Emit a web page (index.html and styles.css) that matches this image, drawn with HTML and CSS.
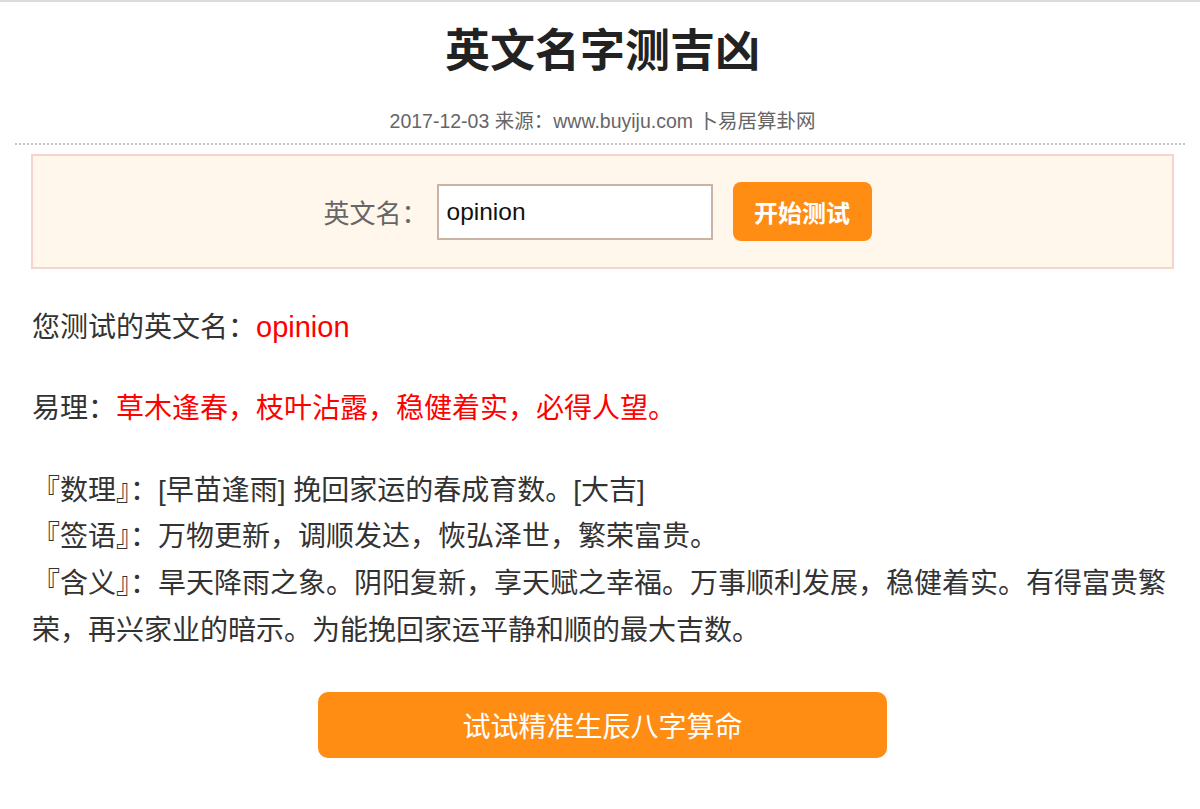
FILE: index.html
```html
<!DOCTYPE html>
<html lang="zh-CN">
<head>
<meta charset="utf-8">
<title>英文名字测吉凶</title>
<link rel="stylesheet" href="styles.css">
</head>
<body>
<div class="page">
  <header class="head">
    <h1 class="title">英文名字测吉凶</h1>
    <p class="meta">2017-12-03 来源：www.buyiju.com 卜易居算卦网</p>
  </header>
  <div class="rule"></div>
  <form class="form-box">
    <label class="form-label" for="ename">英文名：</label>
    <input class="form-input" id="ename" type="text" value="opinion">
    <button class="form-btn" type="button">开始测试</button>
  </form>
  <div class="result">
    <p class="line">您测试的英文名：<span class="red latin">opinion</span></p>
    <p class="line">易理：<span class="red">草木逢春，枝叶沾露，稳健着实，必得人望。</span></p>
    <p class="line">『数理』：[早苗逢雨] 挽回家运的春成育数。[大吉]<br>『签语』：万物更新，调顺发达，恢弘泽世，繁荣富贵。<br>『含义』：旱天降雨之象。阴阳复新，享天赋之幸福。万事顺利发展，稳健着实。有得富贵繁荣，再兴家业的暗示。为能挽回家运平静和顺的最大吉数。</p>
  </div>
  <a class="cta" href="#">试试精准生辰八字算命</a>
</div>
</body>
</html>
```

FILE: styles.css
```css
html, body {
  margin: 0;
  padding: 0;
  background: #fff;
}
body {
  border-top: 2px solid #dcdcdc;
  font-family: "Liberation Sans", "Noto Sans CJK SC", sans-serif;
  color: #333;
}
.page {
  padding-left: 5px;
}
.head {
  text-align: center;
  padding-top: 27px;
}
.title {
  margin: 0;
  font-size: 45px;
  line-height: 45px;
  font-weight: bold;
  color: #222;
}
.meta {
  margin: 37px 0 0;
  font-size: 19.5px;
  line-height: 20px;
  color: #666;
}
.rule {
  margin: 12px 15px 0 10px;
  border-top: 2px dotted #c4c4c4;
}
.form-box {
  margin: 9px 26px 0 26px;
  height: 111px;
  border: 2px solid #f6d4cc;
  background: #fff6ec;
  display: flex;
  align-items: center;
  justify-content: center;
}
.form-label {
  font-size: 26px;
  color: #666;
  margin-right: 9px;
}
.form-input {
  box-sizing: border-box;
  width: 276px;
  height: 56px;
  border: 2px solid #c9b3a4;
  background: #fff;
  padding: 0 8px;
  font-family: "Liberation Sans", "Noto Sans CJK SC", sans-serif;
  font-size: 24.5px;
  color: #111;
  outline: none;
}
.form-btn {
  box-sizing: border-box;
  margin: 0 10px 0 20px;
  width: 139px;
  height: 59px;
  border: 0;
  border-radius: 8px;
  background: #ff8c13;
  color: #fff;
  font-family: "Liberation Sans", "Noto Sans CJK SC", sans-serif;
  font-size: 24px;
  font-weight: bold;
}
.result {
  padding: 35px 12px 0 27px;
}
.line {
  margin: 0 0 34.5px;
  font-size: 28px;
  line-height: 46.75px;
}
.line:last-child {
  margin-bottom: 0;
}
.red {
  color: #f00;
}
.latin {
  font-size: 29px;
}
.cta {
  display: flex;
  align-items: center;
  justify-content: center;
  width: 569px;
  height: 66px;
  margin: 37px auto 0;
  border-radius: 10px;
  background: #ff8c13;
  color: #fff;
  font-size: 28px;
  text-decoration: none;
}
```
